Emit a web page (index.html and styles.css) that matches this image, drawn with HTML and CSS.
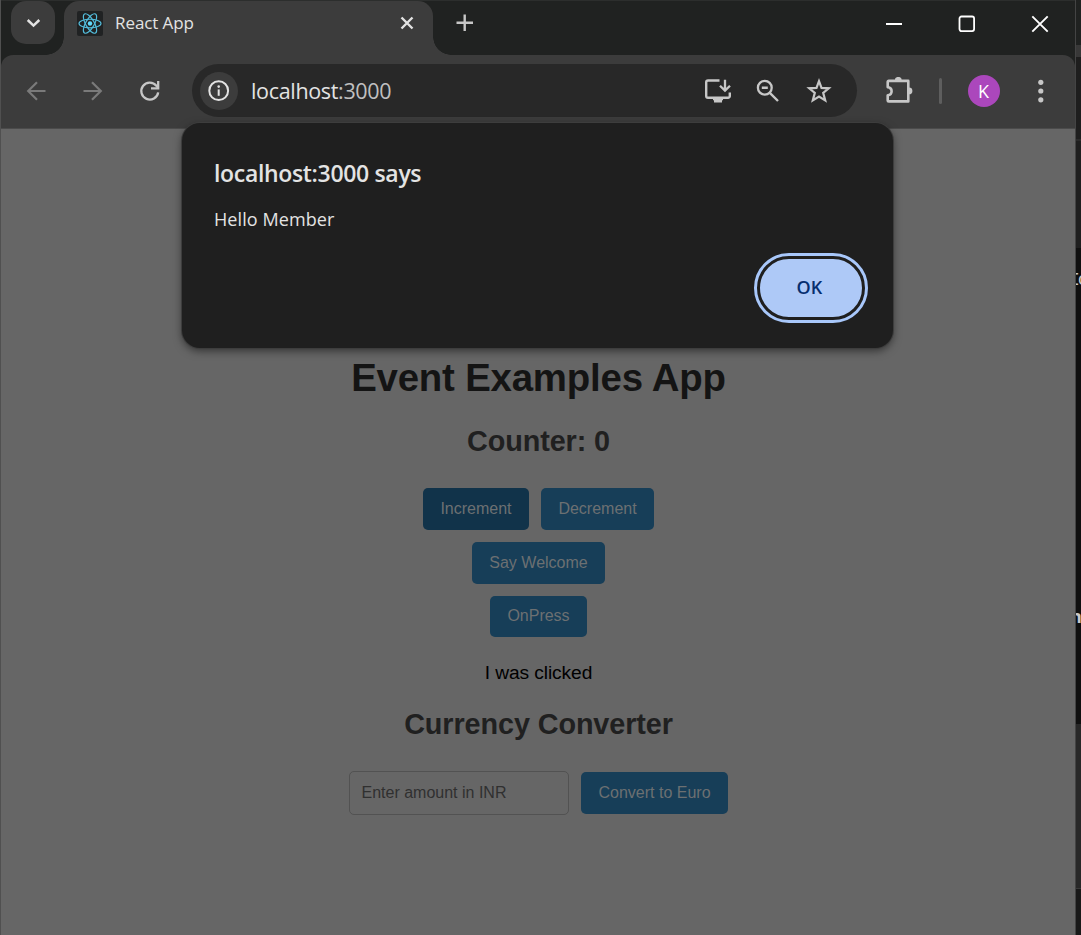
FILE: index.html
```html
<!DOCTYPE html>
<html lang="en">
<head>
<meta charset="utf-8">
<title>React App</title>
<link rel="stylesheet" href="styles.css">
</head>
<body>
<div class="desktop">
  <div class="edge-left"></div>
  <div class="window">
    <div class="tabstrip">
      <button class="tab-search" aria-label="Search tabs"><svg width="16" height="12" viewBox="0 0 16 12"><path d="M2.7 3 8.5 8.6 14.3 3" fill="none" stroke="#e3e3e3" stroke-width="2.5"/></svg></button>
      <div class="tab">
        <svg class="favicon" width="26" height="25" viewBox="0 0 26 25"><rect width="26" height="25" rx="2" fill="#202223"/><g fill="none" stroke="#53bddc" stroke-width="1.15"><ellipse cx="13" cy="12.5" rx="11" ry="4.3"/><ellipse cx="13" cy="12.5" rx="11" ry="4.3" transform="rotate(60 13 12.5)"/><ellipse cx="13" cy="12.5" rx="11" ry="4.3" transform="rotate(120 13 12.5)"/></g><circle cx="13" cy="12.5" r="2.2" fill="#61dafb"/></svg>
        <span class="tab-title">React App</span>
        <svg class="tab-close" width="14" height="14" viewBox="0 0 14 14"><path d="M1.5 1.5 12.5 12.5M12.5 1.5 1.5 12.5" stroke="#e3e3e3" stroke-width="2.4"/></svg>
      </div>
      <svg class="new-tab" width="18" height="18" viewBox="0 0 18 18"><path d="M8.7 .5V17M.5 8.7H17" stroke="#c7c7c7" stroke-width="2.4"/></svg>
      <div class="controls">
        <svg width="18" height="18" viewBox="0 0 18 18"><path d="M1 9H17" stroke="#fff" stroke-width="2"/></svg>
        <svg width="18" height="18" viewBox="0 0 18 18"><rect x="1.5" y="1.5" width="14.6" height="14.6" rx="2" fill="none" stroke="#fff" stroke-width="1.8"/></svg>
        <svg width="18" height="18" viewBox="0 0 18 18"><path d="M1.3 1.3 16.7 16.7M16.7 1.3 1.3 16.7" stroke="#fff" stroke-width="1.9"/></svg>
      </div>
    </div>
    <div class="toolbar">
      <svg class="back" width="20" height="20" viewBox="0 0 20 20"><path d="M19.5 10H2.5M11 1.2 2.2 10 11 18.8" fill="none" stroke="#7a7a7a" stroke-width="2.2"/></svg>
      <svg class="forward" width="20" height="20" viewBox="0 0 20 20"><path d="M.5 10H17.5M9 1.2 17.8 10 9 18.8" fill="none" stroke="#7a7a7a" stroke-width="2.2"/></svg>
      <svg class="reload" width="22" height="22" viewBox="0 0 22 22"><path d="M19.2 12.3A8.5 8.5 0 1 1 17.4 5.7L19 7.6" fill="none" stroke="#c7c7c7" stroke-width="2.3"/><path d="M19.2 1V8.3H12" fill="none" stroke="#c7c7c7" stroke-width="2.3"/></svg>
      <div class="omnibox">
        <span class="site-info"><svg width="22" height="22" viewBox="0 0 22 22"><circle cx="10.7" cy="10.7" r="9.4" fill="none" stroke="#e3e3e3" stroke-width="2"/><path d="M10.7 9.4V15.8" stroke="#e3e3e3" stroke-width="2"/><circle cx="10.7" cy="6.6" r="1.3" fill="#e3e3e3"/></svg></span>
        <span class="url">localhost<span class="port">:3000</span></span>
        <svg class="install" width="28" height="26" viewBox="0 0 28 26"><path d="M15.5 2.5H4A1.8 1.8 0 0 0 2.2 4.3V18A1.8 1.8 0 0 0 4 19.8H24A1.8 1.8 0 0 0 25.8 18V14.5" fill="none" stroke="#c7c7c7" stroke-width="2.4"/><path d="M9 20H19V22.2H18V24.5H10V22.2H9Z" fill="#c7c7c7"/><path d="M21 1.8V12M16 7.7 21 12.6 26 7.7" fill="none" stroke="#c7c7c7" stroke-width="2.3"/></svg>
        <svg class="zoom-out" width="24" height="24" viewBox="0 0 24 24"><circle cx="8.8" cy="8.8" r="6.9" fill="none" stroke="#c7c7c7" stroke-width="2.3"/><path d="M13.8 13.8 22 22M5.8 8.8H11.8" stroke="#c7c7c7" stroke-width="2.4"/></svg>
        <svg class="star" width="26" height="26" viewBox="0 0 26 26"><path d="M13 3.2 15.5 9.9 22.8 10.3 17.2 14.9 19.2 22.4 13 18.5 6.8 22.4 8.8 14.9 3.2 10.3 10.5 9.9Z" fill="none" stroke="#c7c7c7" stroke-width="2.2"/></svg>
      </div>
      <svg class="puzzle" width="28" height="28" viewBox="0 0 28 28"><path d="M3.7 3.9H23.3V24.4H3.7A1 1 0 0 1 2.7 23.4V18.3C7.9 17.7 7.9 10.9 2.7 10.1V4.9A1 1 0 0 1 3.7 3.9Z" fill="none" stroke="#c7c7c7" stroke-width="2.6" stroke-linejoin="round"/><path d="M9.8 3.4A3.5 3.5 0 0 1 16.8 3.4ZM24 10.5A3.4 3.4 0 0 1 24 17.3Z" fill="#c7c7c7"/></svg>
      <span class="divider"></span>
      <span class="avatar">K</span>
      <svg class="menu" width="6" height="24" viewBox="0 0 6 24"><g fill="#c7c7c7"><circle cx="2.8" cy="3.3" r="2.6"/><circle cx="2.8" cy="12" r="2.6"/><circle cx="2.8" cy="20.8" r="2.6"/></g></svg>
    </div>
    <main class="page">
      <h1>Event Examples App</h1>
      <h2>Counter: 0</h2>
      <div class="row"><button class="btn active">Increment</button><button class="btn decrement">Decrement</button></div>
      <div class="row"><button class="btn welcome">Say Welcome</button></div>
      <div class="row"><button class="btn press">OnPress</button></div>
      <p class="message">I was clicked</p>
      <h2>Currency Converter</h2>
      <div class="row converter"><input class="amount" placeholder="Enter amount in INR"><button class="btn convert">Convert to Euro</button></div>
    </main>
    <div class="dialog">
      <div class="dialog-title">localhost:3000 says</div>
      <div class="dialog-text">Hello Member</div>
      <button class="ok">OK</button>
    </div>
  </div>
  <div class="backdrop">
    <div class="b1"></div><div class="b2"></div><div class="b3"></div><div class="b4"></div>
    <div class="b5"><span class="scrap first">Ic</span><span class="scrap second">n</span></div>
    <div class="b6"></div><div class="b7"></div>
  </div>
</div>
</body>
</html>
```

FILE: styles.css
```css
* { box-sizing: border-box; }
body { margin: 0; background: #1b1b1b; font-family: "Open Sans", "Noto Sans", sans-serif; overflow: hidden; }
button { border: 0; padding: 0; margin: 0; font: inherit; }
svg { display: block; flex: none; }
.desktop { display: flex; width: 1081px; height: 935px; overflow: hidden; }
.edge-left { width: 1px; background: #505050; }
.window { position: relative; width: 1075px; height: 935px; background: #202221; border-right: 1px solid #444; }

.tabstrip { display: flex; height: 55px; align-items: flex-start; border-top: 1px solid #2c2e2d; }
.tab-search { width: 44px; height: 43px; margin: 0 0 0 10px; border-radius: 15px; background: #3c3c3c; display: flex; align-items: center; justify-content: center; }
.tab { position: relative; width: 369px; height: 54px; margin-left: 9px; padding: 0 19px 10px 13px; background: #3c3c3c; border-radius: 15px 15px 0 0; display: flex; align-items: center; }
.tab::before, .tab::after { content: ""; position: absolute; bottom: 0; width: 18px; height: 18px; }
.tab::before { right: 100%; background: radial-gradient(circle at 0 0, transparent 17.5px, #3c3c3c 18px); }
.tab::after { left: 100%; background: radial-gradient(circle at 100% 0, transparent 17.5px, #3c3c3c 18px); }
.tab-title { margin-left: 12px; font-size: 17px; line-height: 24px; color: #e3e3e3; letter-spacing: -.08px; white-space: nowrap; }
.tab-close { margin-left: auto; }
.new-tab { margin: 13px 0 0 23px; }
.controls { margin: 14px 26px 0 auto; display: flex; gap: 55px; }

.toolbar { height: 74px; padding-bottom: 2px; display: flex; align-items: center; background: #3c3c3c; border-radius: 12px 12px 0 0; border-bottom: 1px solid #4b4b4b; }
.back { margin-left: 25px; }
.forward { margin-left: 37px; }
.reload { margin-left: 36px; }
.omnibox { width: 665px; height: 53px; margin-left: 31px; padding: 0 25px 0 8px; display: flex; align-items: center; background: #282828; border-radius: 27px; }
.site-info { width: 38px; height: 38px; border-radius: 50%; background: #3c3c3c; display: flex; align-items: center; justify-content: center; }
.url { margin-left: 13px; margin-right: auto; font-size: 21.5px; line-height: 30px; color: #e3e3e3; letter-spacing: -.33px; }
.port { color: #c0c0c0; }
.zoom-out { margin-left: 24px; }
.star { margin-left: 26px; }
.puzzle { margin-left: 28px; }
.divider { width: 3px; height: 26px; margin-left: 26px; border-radius: 2px; background: #5e5e5e; }
.avatar { width: 32px; height: 32px; margin-left: 26px; padding-right: 1px; border-radius: 50%; background: #ab47bc; color: #fff; font: 18px/32px "Open Sans", sans-serif; text-align: center; }
.menu { margin-left: 38px; }

.page { height: 806px; padding-top: 227px; padding-left: 1px; background: #666; text-align: center; font-family: "Liberation Sans", Arial, sans-serif; }
h1, h2, p { margin: 0; }
h1 { font-size: 38.4px; line-height: 44px; letter-spacing: -.2px; color: #141414; }
h2 { font-size: 28.8px; line-height: 33px; letter-spacing: -.1px; color: #202020; }
h1 + h2 { margin: 25px 0 30px; }
.row { display: flex; justify-content: center; gap: 12px; margin: 0 1px 12px 0; }
.btn { width: 106px; height: 42px; padding-left: 1px; border-radius: 5px; background: #173e58; color: #6c7072; font-size: 16px; line-height: 42px; white-space: nowrap; }
.active { background: #11334a; }
.decrement { width: 113px; }
.welcome { width: 133px; }
.press { width: 97px; height: 41px; padding-bottom: 2px; line-height: 39px; }
.message { padding-top: 13px; font-size: 19.2px; line-height: 22px; letter-spacing: -.1px; color: #000; }
.message + h2 { margin: 24px 0 30px; }
.converter { align-items: center; }
.amount { width: 220px; height: 44px; padding: 0 12px; border: 1px solid #525252; border-radius: 5px; background: #666; font: 16px "Liberation Sans", Arial, sans-serif; }
.amount::placeholder { color: #303030; opacity: 1; }
.convert { width: 147px; }

.dialog { position: absolute; left: 181px; top: 123px; width: 711px; height: 225px; padding: 33px 28px 0 32px; display: flex; flex-direction: column; align-items: flex-start; background: #1f1f1f; border-radius: 18px; box-shadow: 0 0 0 1px #3d3d3d, 0 3px 8px rgba(0,0,0,.5); color: #e3e3e3; }
.dialog-title { font-size: 23px; font-weight: 600; line-height: 34px; letter-spacing: -.33px; white-space: nowrap; }
.dialog-text { margin-top: 16px; font-size: 18px; line-height: 26px; letter-spacing: .08px; white-space: nowrap; }
.ok { width: 108px; height: 64px; margin: 24px 0 0; padding: 0 3px 3px 0; align-self: flex-end; border: 3px solid #1f1f1f; border-radius: 32px; outline: 3px solid #a8c7fa; background: #aec9f7; color: #062e6f; font-size: 18px; font-weight: 600; letter-spacing: .2px; }

.backdrop { width: 5px; display: flex; flex-direction: column; }
.b1 { height: 45px; background: #202221; }
.b2 { height: 12px; background: #383838; }
.b3 { height: 84px; background: #1e1e1e; border-bottom: 2px solid #2b2b2b; }
.b4 { height: 107px; background: #1f1f1f; }
.b5 { height: 476px; background: #101010; position: relative; overflow: hidden; }
.b6 { height: 165px; background: #282828; border-bottom: 1px solid #3a3a3a; }
.b7 { height: 46px; background: #191919; }
.scrap { position: absolute; color: #c8c8c8; font: 18px/20px "Liberation Mono", monospace; }
.first { left: -7px; top: 22px; letter-spacing: -2px; }
.second { left: -6px; top: 358px; font: bold 18px/20px "Open Sans", sans-serif; }
```
